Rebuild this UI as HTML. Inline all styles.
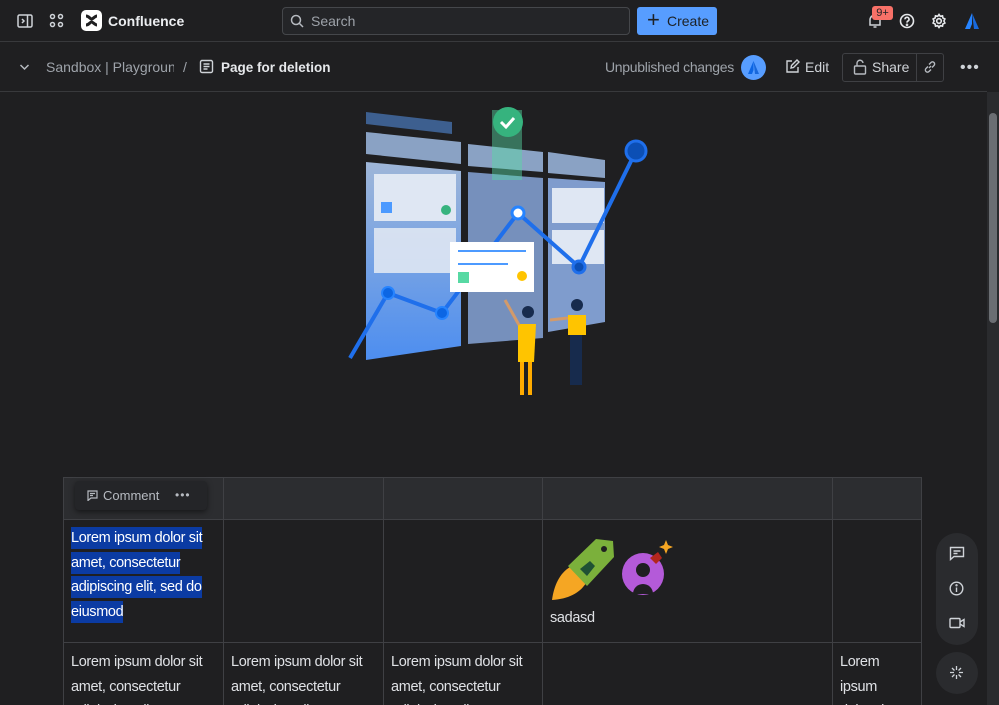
<!DOCTYPE html>
<html style="width:999px;height:705px;overflow:hidden"><head><meta charset="utf-8"><style>
*{box-sizing:border-box;margin:0;padding:0}
body{width:999px;height:705px;overflow:hidden;background:#1f1f21;font-family:"Liberation Sans",sans-serif;color:#cfd3d8;position:relative}
#w{position:relative;width:999px;height:705px;overflow:hidden}
.abs{position:absolute}
.top{left:0;top:0;width:999px;height:42px;border-bottom:1px solid #38393c}
.bc{left:0;top:43px;width:987px;height:49px;border-bottom:1px solid #38393c}
svg{display:block}
table{position:absolute;left:63px;top:477px;border-collapse:collapse;font-size:14.5px;line-height:24.5px;color:#dfe1e5;letter-spacing:-0.35px;table-layout:fixed}
td{border:1px solid #3f4044;vertical-align:top;padding:7px 6px 8px 7px}
tr.h td{background:#2c2d30;height:42px}
.sel{background:#0b3ba3;color:#fff;padding:3px 0}
</style></head><body><div id="w">
<div class="abs top">
 <svg class="abs" style="left:17px;top:13px" width="16" height="16" viewBox="0 0 16 16" fill="none" stroke="#cfd3d8" stroke-width="1.5"><rect x="1" y="2" width="14" height="12" rx="1.5"/><path d="M10.5 2v12M5 6l2 2-2 2"/></svg>
 <svg class="abs" style="left:49px;top:13px" width="15" height="15" viewBox="0 0 15 15" fill="none" stroke="#cfd3d8" stroke-width="1.5"><circle cx="3.5" cy="3.5" r="2"/><circle cx="11.5" cy="3.5" r="2"/><circle cx="3.5" cy="11.5" r="2"/><circle cx="11.5" cy="11.5" r="2"/></svg>
 <div class="abs" style="left:81px;top:10px;width:21px;height:21px;background:#fff;border-radius:5px"><svg width="21" height="21" viewBox="0 0 21 21"><path d="M5 6c3 0 4 3 5.5 3S14 6 16 6M5 15c3 0 4-3 5.5-3S14 15 16 15" stroke="#1f1f21" stroke-width="3" fill="none"/></svg></div>
 <div class="abs" style="left:108px;top:13px;font-weight:bold;font-size:14px;color:#eceef1">Confluence</div>
 <div class="abs" style="left:282px;top:7px;width:348px;height:28px;border:1px solid #45474b;border-radius:4px;background:#242528"></div>
 <svg class="abs" style="left:290px;top:14px" width="14" height="14" viewBox="0 0 14 14" fill="none" stroke="#b6bac0" stroke-width="1.5"><circle cx="6" cy="6" r="4.5"/><path d="M9.5 9.5L13 13"/></svg>
 <div class="abs" style="left:311px;top:13px;font-size:14px;color:#9ea3aa">Search</div>
 <div class="abs" style="left:637px;top:7px;width:80px;height:28px;background:#579dff;border-radius:3px;color:#1d2125;font-size:14px;line-height:28px;padding-left:30px">Create</div>
 <div class="abs" style="left:647px;top:10px;font-size:22px;line-height:20px;color:#1d2125">+</div>
 <svg class="abs" style="left:867px;top:13px" width="16" height="16" viewBox="0 0 16 16" fill="none" stroke="#cfd3d8" stroke-width="1.5"><path d="M3 12V7a5 5 0 0110 0v5H3zM6.5 14h3"/></svg>
 <div class="abs" style="left:872px;top:6px;width:21px;height:14px;background:#f87168;border-radius:3px;color:#1d2125;font-size:11px;line-height:14px;text-align:center">9+</div>
 <svg class="abs" style="left:899px;top:13px" width="16" height="16" viewBox="0 0 16 16" fill="none" stroke="#e6e8eb" stroke-width="1.6"><circle cx="8" cy="8" r="6.5"/><path d="M6 6.3a2 2 0 113 1.7c-.8.4-1 .8-1 1.6"/><circle cx="8" cy="11.8" r=".5"/></svg>
 <svg class="abs" style="left:931px;top:13px" width="16" height="16" viewBox="0 0 16 16" fill="none" stroke="#e6e8eb" stroke-width="1.6"><circle cx="8" cy="8" r="2.3"/><path d="M8 1.5l1.3 1.8 2.2-.5.4 2.2 2 1-1 2 1 2-2 1-.4 2.2-2.2-.5L8 14.5l-1.3-1.8-2.2.5-.4-2.2-2-1 1-2-1-2 2-1 .4-2.2 2.2.5z"/></svg>
 <svg class="abs" style="left:963px;top:12px" width="18" height="18" viewBox="0 0 18 18"><path d="M9 1L2 17h5l2-5z" fill="#2684ff"/><path d="M9 1l7 16h-5z" fill="#1868db"/></svg>
</div>
<div class="abs bc">
 <svg class="abs" style="left:19px;top:20px" width="11" height="8" viewBox="0 0 11 8" fill="none" stroke="#b6bac0" stroke-width="1.5"><path d="M1.5 2l4 4 4-4"/></svg>
 <div class="abs" style="left:46px;top:16px;font-size:14px;color:#9ea3aa;width:128px;overflow:hidden;white-space:nowrap">Sandbox | Playground</div>
 <div class="abs" style="left:183px;top:16px;font-size:14px;color:#9ea3aa">/</div>
 <svg class="abs" style="left:199px;top:16px" width="15" height="15" viewBox="0 0 15 15" fill="none" stroke="#cfd3d8" stroke-width="1.4"><rect x="1.5" y="1.5" width="12" height="12" rx="1.5"/><path d="M4.5 5h6M4.5 7.5h6M4.5 10h4"/></svg>
 <div class="abs" style="left:221px;top:17px;font-size:13.5px;font-weight:bold;color:#e6e8eb">Page for deletion</div>
 <div class="abs" style="left:605px;top:16px;font-size:14px;color:#9ea3aa;letter-spacing:-0.3px">Unpublished changes</div>
 <div class="abs" style="left:741px;top:12px;width:25px;height:25px;border-radius:50%;background:#579dff"><svg width="25" height="25" viewBox="0 0 25 25"><path d="M12.5 6L7 19h4l1.5-4z" fill="#0c66e4"/><path d="M12.5 6L18 19h-4z" fill="#1868db"/></svg></div>
 <svg class="abs" style="left:785px;top:16px" width="15" height="15" viewBox="0 0 15 15" fill="none" stroke="#cfd3d8" stroke-width="1.4"><path d="M7 2H2v11h11V8M6 9l.5-2.5L12 1l2 2-5.5 5.5z"/></svg>
 <div class="abs" style="left:805px;top:16px;font-size:14px;color:#cfd3d8">Edit</div>
 <div class="abs" style="left:842px;top:10px;width:102px;height:29px;border:1px solid #3f4044;border-radius:3px"></div>
 <div class="abs" style="left:916px;top:10px;width:1px;height:29px;background:#3f4044"></div>
 <svg class="abs" style="left:853px;top:16px" width="14" height="16" viewBox="0 0 14 16" fill="none" stroke="#b6bac0" stroke-width="1.4"><rect x="1.5" y="7" width="11" height="8" rx="1"/><path d="M4 7V4.5a3 3 0 016-.5"/></svg>
 <div class="abs" style="left:872px;top:16px;font-size:14px;color:#cfd3d8">Share</div>
 <svg class="abs" style="left:923px;top:17px" width="14" height="14" viewBox="0 0 14 14" fill="none" stroke="#b6bac0" stroke-width="1.4"><path d="M6 8l2-2M5 6.5l-2 2a2 2 0 003 3l2-2M9 7.5l2-2a2 2 0 00-3-3l-2 2"/></svg>
 <div class="abs" style="left:960px;top:16px;font-size:16px;color:#cfd3d8;letter-spacing:1px">•••</div>
</div>
<div class="abs" style="left:987px;top:92px;width:12px;height:613px;background:#2a2b2e"></div>
<div class="abs" style="left:989px;top:113px;width:8px;height:210px;background:#6b6e73;border-radius:4px"></div>
<svg class="abs" style="left:340px;top:100px" width="320" height="300" viewBox="0 0 320 300">
 <defs><linearGradient id="g" x1="0" y1="0" x2="0" y2="1"><stop offset="0" stop-color="#9fb6d8"/><stop offset="1" stop-color="#4d8ef0"/></linearGradient></defs>
 <path d="M26 12l86 10v12L26 24z" fill="#3d5f8f"/>
 <path d="M26 32l95 10v22L26 54z" fill="#8aa2c4"/>
 <path d="M26 62l95 9v175L26 260z" fill="url(#g)"/>
 <path d="M128 44l75 8v20l-75-6z" fill="#8aa2c4"/>
 <path d="M128 72l75 6v160l-75 6z" fill="#7f9ccd" opacity=".9"/>
 <path d="M208 52l57 8v18l-57-5z" fill="#8aa2c4"/>
 <path d="M208 78l57 4v140l-57 10z" fill="#7f9ccd"/>
 <rect x="34" y="74" width="82" height="47" fill="#dfe7f3"/>
 <rect x="41" y="102" width="11" height="11" fill="#4c9aff"/><circle cx="106" cy="110" r="5" fill="#36b37e"/>
 <rect x="34" y="128" width="82" height="45" fill="#dfe7f3" opacity=".9"/>
 <rect x="212" y="88" width="52" height="35" fill="#dfe7f3"/>
 <rect x="212" y="130" width="52" height="34" fill="#dfe7f3"/>
 <rect x="152" y="10" width="30" height="70" fill="#57d9a3" opacity=".45"/>
 <circle cx="168" cy="22" r="15" fill="#36b37e"/><path d="M161 22l5 5 8-9" stroke="#fff" stroke-width="3" fill="none"/>
 <path d="M10 258L48 193 102 213 178 113 239 167 296 51" stroke="#1f6feb" stroke-width="4" fill="none"/>
 <circle cx="48" cy="193" r="6" fill="#0c66e4" stroke="#2684ff" stroke-width="2"/>
 <circle cx="102" cy="213" r="6" fill="#0c66e4" stroke="#2684ff" stroke-width="2"/>
 <circle cx="178" cy="113" r="6" fill="#fff" stroke="#2684ff" stroke-width="3"/>
 <circle cx="239" cy="167" r="6" fill="#0c4fb5" stroke="#1f6feb" stroke-width="3"/>
 <circle cx="296" cy="51" r="10" fill="#0c4fb5" stroke="#1f6feb" stroke-width="3"/>
 <rect x="110" y="142" width="84" height="50" fill="#fff"/>
 <rect x="118" y="150" width="68" height="2" fill="#4c9aff"/><rect x="118" y="163" width="50" height="2" fill="#4c9aff"/>
 <rect x="118" y="172" width="11" height="11" fill="#57d9a3"/><circle cx="182" cy="176" r="5" fill="#ffc400"/>
 <circle cx="188" cy="212" r="6" fill="#172b4d"/><path d="M178 224h18l-2 38h-16z" fill="#ffc400"/><path d="M180 262h4v33h-4zM188 262h4v33h-4z" fill="#ffab00"/>
 <path d="M165 200l14 25" stroke="#d39a6a" stroke-width="3"/>
 <circle cx="237" cy="205" r="6" fill="#172b4d"/><path d="M228 215h18v20h-18z" fill="#ffc400"/><path d="M230 235h12v50h-12z" fill="#172b4d"/>
 <path d="M228 218l-18 2" stroke="#d39a6a" stroke-width="3"/>
</svg>
<table>
<colgroup><col style="width:160px"><col style="width:160px"><col style="width:159px"><col style="width:290px"><col style="width:89px"></colgroup>
<tr class="h"><td></td><td></td><td></td><td></td><td></td></tr>
<tr style="height:123px"><td style="padding-top:6px"><span class="sel">Lorem ipsum dolor sit amet, consectetur adipiscing elit, sed do eiusmod</span></td><td></td><td></td>
<td style="padding-top:16px"><svg width="130" height="66" viewBox="0 0 130 66"><path d="M2 64c2-15 8-27 18-33l16 16c-6 10-18 16-34 17z" fill="#f5a623"/><path d="M18 30L46 3l17 2 1 16-27 29z" fill="#7bb03b"/><path d="M30 33l10-8 5 5-8 10z" fill="#1f5134"/><circle cx="54" cy="13" r="3" fill="#1f1f21"/><circle cx="93" cy="38" r="21" fill="#b45ad9"/><circle cx="93" cy="34" r="7" fill="#1f1f21"/><path d="M83 58a10 10 0 0120 0z" fill="#1f1f21"/><path d="M100 22l8-6 4 6-6 6z" fill="#b3261e"/><path d="M116 4l2 5 5 2-5 2-2 5-2-5-5-2 5-2z" fill="#f5a623"/></svg><div style="margin-top:4px">sadasd</div></td><td></td></tr>
<tr><td>Lorem ipsum dolor sit amet, consectetur adipiscing elit</td><td>Lorem ipsum dolor sit amet, consectetur adipiscing elit</td><td>Lorem ipsum dolor sit amet, consectetur adipiscing elit</td><td></td><td style="padding-right:25px">Lorem ipsum dolor sit</td></tr>
</table>
<div class="abs" style="left:75px;top:481px;width:132px;height:29px;background:#242528;border-radius:4px;box-shadow:0 2px 6px rgba(0,0,0,.5)"></div>
<svg class="abs" style="left:87px;top:490px" width="11" height="11" viewBox="0 0 11 11" fill="none" stroke="#b6bac0" stroke-width="1.2"><path d="M1 1h9v7H4l-3 2.5z"/><path d="M3 3.5h5M3 5.5h3"/></svg>
<div class="abs" style="left:103px;top:488px;font-size:13px;color:#b6bac0">Comment</div>
<div class="abs" style="left:175px;top:488px;font-size:12px;color:#b6bac0;letter-spacing:1px">•••</div>
<div class="abs" style="left:936px;top:533px;width:42px;height:112px;background:#2a2b2e;border-radius:21px"></div>
<svg class="abs" style="left:949px;top:546px" width="16" height="15" viewBox="0 0 16 15" fill="none" stroke="#cfd3d8" stroke-width="1.4"><path d="M1.5 1.5h13v9H5l-3.5 3z"/><path d="M4.5 5h7M4.5 7.5h4"/></svg>
<svg class="abs" style="left:949px;top:581px" width="15" height="15" viewBox="0 0 15 15" fill="none" stroke="#cfd3d8" stroke-width="1.4"><circle cx="7.5" cy="7.5" r="6.3"/><path d="M7.5 6.5v4.5"/><circle cx="7.5" cy="4.3" r=".5"/></svg>
<svg class="abs" style="left:949px;top:617px" width="16" height="12" viewBox="0 0 16 12" fill="none" stroke="#cfd3d8" stroke-width="1.4"><rect x="1" y="1.5" width="10" height="9" rx="1"/><path d="M11 5l4-2.5v7L11 7"/></svg>
<div class="abs" style="left:936px;top:652px;width:42px;height:42px;background:#2a2b2e;border-radius:21px"></div>
<svg class="abs" style="left:949px;top:665px" width="15" height="15" viewBox="0 0 15 15" stroke="#cfd3d8" stroke-width="1.3"><path d="M7.5 1v4M7.5 10v4M1 7.5h4M10 7.5h4M3 3l2.5 2.5M9.5 9.5L12 12M12 3L9.5 5.5M5.5 9.5L3 12"/></svg>
</div></body></html>
